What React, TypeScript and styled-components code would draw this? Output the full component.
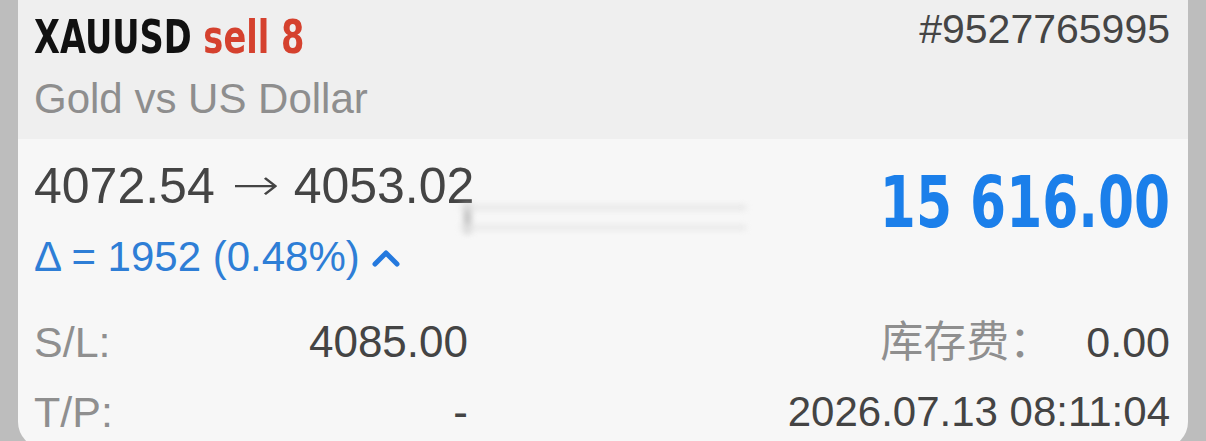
import React from 'react';
import styled, { createGlobalStyle } from 'styled-components';

interface detailProps {
  label: string;
  value: string;
  size: number;
}

const position = {
  symbol: 'XAUUSD',
  side: 'sell 8',
  description: 'Gold vs US Dollar',
  ticket: '#9527765995',
  openPrice: '4072.54',
  currentPrice: '4053.02',
  delta: 'Δ = 1952 (0.48%)',
  profit: '15 616.00',
  swap: '0.00',
  openTime: '2026.07.13 08:11:04',
};

const leftDetails: detailProps[] = [
  { label: 'S/L:', value: '4085.00', size: 44 },
  { label: 'T/P:', value: '-', size: 44 },
];

const ChevronUp = () => (
  <svg width='28' height='20' viewBox='0 0 28 20'>
    <polyline
      points='3,16 14,5 25,16'
      fill='none'
      stroke='#2479de'
      strokeWidth='5'
      strokeLinecap='round'
      strokeLinejoin='round'
    />
  </svg>
);

const App = () => {
  return (
    <>
      <GlobalStyle />
      <Page>
        <Card>
          <Header>
            <TitleBlock>
              <Title>
                {position.symbol} <Side>{position.side}</Side>
              </Title>
              <Subtitle>{position.description}</Subtitle>
            </TitleBlock>
            <Ticket>{position.ticket}</Ticket>
          </Header>
          <Body>
            <PriceRow>
              <div>
                <Prices>
                  {position.openPrice}
                  <Arrow>→</Arrow>
                  {position.currentPrice}
                </Prices>
                <Delta>
                  {position.delta}
                  <ChevronUp />
                </Delta>
              </div>
              <Profit>{position.profit}</Profit>
              <Smudge />
            </PriceRow>
            <Details>
              <DetailColumn>
                {leftDetails.map((item) => (
                  <React.Fragment key={item.label}>
                    <Label>{item.label}</Label>
                    <Value $size={item.size}>{item.value}</Value>
                  </React.Fragment>
                ))}
              </DetailColumn>
              <RightColumn>
                <SwapLine>
                  <Label>库存费：</Label>
                  <Value $size={43}>{position.swap}</Value>
                </SwapLine>
                <Value $size={42}>{position.openTime}</Value>
              </RightColumn>
            </Details>
          </Body>
        </Card>
      </Page>
    </>
  );
};

const GlobalStyle = createGlobalStyle`
  html, body {
    margin: 0;
    padding: 0;
    overflow: hidden;
  }
  body {
    font-family: 'Liberation Sans', Arial, 'Noto Sans CJK SC', sans-serif;
    background: #bdbdbd;
  }
`;
const Page = styled.div`
  height: 441px;
  padding: 0 18px;
  background: #bdbdbd;
  overflow: hidden;
`;
const Card = styled.div`
  background: #f7f7f7;
  border-radius: 0 0 26px 26px;
  height: 448px;
  overflow: hidden;
`;
const Header = styled.div`
  height: 139px;
  box-sizing: border-box;
  background: #efefef;
  padding: 4px 18px 0 16px;
  display: flex;
  justify-content: space-between;
  align-items: flex-start;
`;
const TitleBlock = styled.div`
  display: flex;
  flex-direction: column;
  align-items: flex-start;
  padding-top: 5px;
`;
// no narrow face installed, so the bold headline is squeezed by hand
const Title = styled.div`
  font-family: 'DejaVu Sans', sans-serif;
  font-weight: bold;
  font-size: 46px;
  line-height: 56px;
  color: #111;
  white-space: nowrap;
  transform: scaleX(0.731);
  transform-origin: left center;
`;
const Side = styled.span`
  color: #d5412e;
`;
const Subtitle = styled.div`
  margin-top: 9px;
  font-size: 42px;
  line-height: 50px;
  color: #8e8e8e;
`;
const Ticket = styled.div`
  font-size: 41px;
  line-height: 50px;
  color: #454545;
`;
const Body = styled.div`
  padding: 18px 18px 0 16px;
`;
const PriceRow = styled.div`
  position: relative;
  display: flex;
  justify-content: space-between;
  align-items: flex-start;
`;
const Prices = styled.div`
  font-size: 50px;
  line-height: 58px;
  color: #444;
  white-space: nowrap;
`;
const Arrow = styled.span`
  display: inline-block;
  margin: 0 20px 0 22px;
  font-family: 'DejaVu Sans', sans-serif;
  font-weight: 200;
  transform: scaleX(1.3) translateY(-3px);
  font-size: 44px;
`;
const Delta = styled.div`
  margin-top: 15px;
  display: flex;
  align-items: center;
  gap: 12px;
  font-size: 42px;
  line-height: 50px;
  color: #2e7ed6;
  svg {
    margin-top: 2px;
  }
`;
const Profit = styled.div`
  margin-top: 5px;
  font-family: 'DejaVu Sans', sans-serif;
  font-weight: bold;
  font-size: 72px;
  line-height: 80px;
  color: #1b7fea;
  white-space: nowrap;
  transform: scaleX(0.72);
  transform-origin: right center;
`;
// soft smear left over on the screen next to the current price
const Smudge = styled.div`
  position: absolute;
  left: 426px;
  top: 44px;
  width: 286px;
  height: 36px;
  background:
    linear-gradient(#dadada, #dadada) 0 4px / 100% 5px no-repeat,
    linear-gradient(#dedede, #dedede) 0 24px / 100% 5px no-repeat,
    linear-gradient(#a0a0a0, #a0a0a0) 4px 2px / 7px 30px no-repeat;
  filter: blur(3px);
  opacity: 0.65;
`;
const Details = styled.div`
  margin-top: 25px;
  display: flex;
  justify-content: space-between;
`;
const DetailColumn = styled.div`
  width: 434px;
  display: grid;
  grid-template-columns: auto 1fr;
  grid-auto-rows: 70px;
  align-items: center;
`;
const RightColumn = styled.div`
  display: grid;
  grid-auto-rows: 70px;
  justify-items: end;
  align-items: center;
`;
const SwapLine = styled.div`
  display: flex;
  gap: 34px;
`;
const Label = styled.span`
  font-size: 43px;
  line-height: 70px;
  color: #8f8f8f;
  font-family: 'Liberation Sans', 'Noto Sans CJK SC', sans-serif;
`;
const Value = styled.span<{ $size: number }>`
  font-size: ${(p) => p.$size}px;
  line-height: 70px;
  color: #444;
  text-align: right;
`;

export default App;
